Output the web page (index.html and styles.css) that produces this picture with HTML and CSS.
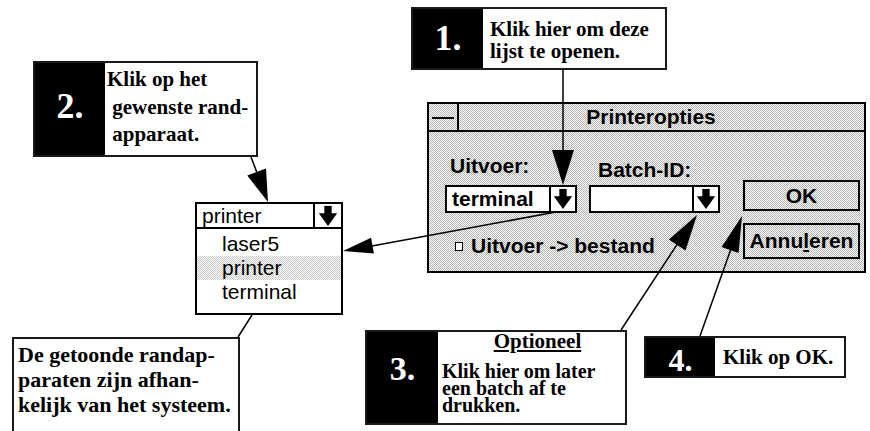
FILE: index.html
```html
<!DOCTYPE html>
<html lang="nl">
<head>
    <meta charset="UTF-8">
    <meta name="viewport" content="width=device-width, initial-scale=1.0">
    <title>Printeropties</title>
    <link rel="stylesheet" href="styles.css">
</head>
<body>
    <div class="canvas">
        <!-- callouts -->
        <div class="callout c1">
            <div class="num">1.</div>
            <div class="txt">Klik hier om deze<br>lijst te openen.</div>
        </div>

        <div class="callout c2">
            <div class="num">2.</div>
            <div class="txt">Klik op het<br>&nbsp;gewenste rand-<br>&nbsp;apparaat.</div>
        </div>

        <div class="callout c3">
            <div class="num">3.</div>
            <div class="txt">
                <div class="head">Optioneel</div>
                <div class="body">Klik hier om later<br>een batch af te<br>drukken.</div>
            </div>
        </div>

        <div class="callout c4">
            <div class="num">4.</div>
            <div class="txt">Klik op OK.</div>
        </div>

        <div class="note">De getoonde randap-<br>paraten zijn afhan-<br>kelijk van het systeem.</div>

        <!-- the dialog -->
        <div class="dialog">
            <div class="titlebar">
                <div class="close"><span class="dash"></span></div>
                <div class="title">Printeropties</div>
            </div>
            <div class="dlg-body">
                <div class="dlg-left">
                    <div class="fields">
                        <div class="field f-out">
                            <div class="lbl">Uitvoer:</div>
                            <div class="combo">
                                <span class="val">terminal</span>
                                <span class="drop"><svg viewBox="0 0 24 24"><rect x="8" y="1" width="8" height="10"/><polygon points="2,9 22,9 12,23"/></svg></span>
                            </div>
                        </div>
                        <div class="field f-batch">
                            <div class="lbl">Batch-ID:</div>
                            <div class="combo">
                                <span class="val"></span>
                                <span class="drop"><svg viewBox="0 0 24 24"><rect x="8" y="1" width="8" height="10"/><polygon points="2,9 22,9 12,23"/></svg></span>
                            </div>
                        </div>
                    </div>
                    <div class="check"><span class="box"></span>Uitvoer -&gt; bestand</div>
                </div>
                <div class="dlg-buttons">
                    <div class="btn ok">OK</div>
                    <div class="btn cancel">Annu<u>l</u>eren</div>
                </div>
            </div>
        </div>

        <!-- opened list -->
        <div class="listbox">
            <div class="list-head">
                <span class="val">printer</span>
                <span class="drop"><svg viewBox="0 0 24 24"><rect x="8" y="1" width="8" height="10"/><polygon points="2,9 22,9 12,23"/></svg></span>
            </div>
            <ul class="items">
                <li>laser5</li>
                <li class="sel">printer</li>
                <li>terminal</li>
            </ul>
        </div>

        <!-- arrows and leader lines -->
        <svg class="arrows" viewBox="0 0 870 431">
            <path d="M563 70 L563 152"/>
            <polygon points="563,185 552,150 574,150"/>
            <path d="M251 157 L262 186"/>
            <polygon points="268,202 247.3,175.6 266,168.6"/>
            <path d="M556 212 L372 246"/>
            <polygon points="343,251 371.1,237.7 373.9,253.5"/>
            <path d="M621 330 L680 240"/>
            <polygon points="697,215 668.9,239.5 685.5,250.5"/>
            <path d="M700 336 L732 246"/>
            <polygon points="742,216 721.6,247 738.6,253"/>
            <path d="M238 337 L252 315"/>
        </svg>
    </div>
</body>
</html>
```

FILE: styles.css
```css
body {
    margin: 0;
    background: #fff;
    color: #000;
}

.canvas {
    position: relative;
    width: 870px;
    height: 431px;
    overflow: hidden;
    background: #fff;
}

/* ---------- callouts ---------- */

.callout {
    position: absolute;
    display: flex;
    box-sizing: border-box;
    border: 2px solid #1a1a1a;
    background: #fff;
    font-family: "Liberation Serif", "Times New Roman", serif;
    font-weight: bold;
}

.callout .num {
    background: #000;
    color: #fff;
    text-align: center;
    flex-shrink: 0;
}

.c1 { left: 411px; top: 7px; width: 256px; height: 63px; }
.c1 .num { width: 70px; font-size: 36px; line-height: 36px; padding-top: 11px; }
.c1 .txt { font-size: 21px; line-height: 22px; padding: 9px 0 0 7px; }

.c2 { left: 33px; top: 61px; width: 225px; height: 96px; }
.c2 .num { width: 70px; font-size: 36px; line-height: 36px; padding-top: 25px; }
.c2 .txt { font-size: 21px; line-height: 27.5px; padding: 3px 0 0 2px; }

.c3 { left: 365px; top: 330px; width: 262px; height: 95px; }
.c3 .num { width: 71px; font-size: 34px; line-height: 34px; padding-top: 20px; }
.c3 .txt { flex: 1; padding-left: 4px; }
.c3 .head {
    font-size: 21px;
    line-height: 19px;
    text-align: center;
    padding-left: 8px;
    text-decoration: underline;
}
.c3 .body { font-size: 20px; line-height: 17px; margin-top: 12px; }

.c4 { left: 644px; top: 336px; width: 202px; height: 42px; }
.c4 .num { width: 69px; font-size: 32px; line-height: 32px; padding-top: 6px; }
.c4 .txt { font-size: 21px; line-height: 38px; padding-left: 8px; }

.note {
    position: absolute;
    left: 12px;
    top: 337px;
    width: 228px;
    height: 120px;
    box-sizing: border-box;
    border: 2px solid #1a1a1a;
    padding: 3px 0 0 4px;
    font-family: "Liberation Serif", "Times New Roman", serif;
    font-weight: bold;
    font-size: 22px;
    line-height: 25px;
}

/* ---------- dialog ---------- */

.dialog {
    position: absolute;
    left: 427px;
    top: 102px;
    width: 439px;
    height: 171px;
    box-sizing: border-box;
    border: 2px solid #000;
    background: repeating-conic-gradient(#b4b4b4 0% 25%, #fff 0% 50%) 0 0 / 2px 2px;
    font-family: "Liberation Sans", Arial, sans-serif;
    font-weight: bold;
    font-size: 21px;
}

.titlebar {
    display: flex;
    height: 28px;
    box-sizing: border-box;
    border-bottom: 2px solid #000;
}

.close {
    width: 30px;
    box-sizing: border-box;
    border-right: 2px solid #000;
    display: flex;
    align-items: center;
    justify-content: center;
}

.close .dash {
    display: block;
    width: 22px;
    height: 2px;
    background: #000;
    margin-top: 1px;
}

.title {
    flex: 1;
    text-align: center;
    line-height: 26px;
    padding-right: 21px;
}

.dlg-body {
    display: flex;
}

.dlg-left {
    padding: 23px 0 0 16px;
}

.fields {
    display: flex;
    gap: 12px;
}

.field .lbl {
    line-height: 22px;
    margin: 0 0 8px 5px;
}

.f-batch .lbl {
    margin: 4px 0 4px 9px;
}

.combo,
.list-head {
    display: flex;
    box-sizing: border-box;
    border: 2px solid #000;
    background: #fff;
}

.combo { height: 28px; }
.f-out .combo { width: 132px; }
.f-batch .combo { width: 131px; }

.combo .val {
    flex: 1;
    line-height: 24px;
    padding-left: 5px;
}

.drop {
    width: 26px;
    box-sizing: border-box;
    border-left: 2px solid #000;
    display: flex;
    align-items: center;
    justify-content: center;
}

.drop svg {
    width: 22px;
    height: 22px;
    fill: #000;
}

.check {
    display: flex;
    align-items: center;
    line-height: 22px;
    margin: 22px 0 0 10px;
}

.check .box {
    width: 8px;
    height: 9px;
    box-sizing: border-box;
    border: 1.5px solid #000;
    background: #fff;
    margin-right: 8px;
}

.dlg-buttons {
    padding: 48px 0 0 23px;
}

.btn {
    width: 117px;
    box-sizing: border-box;
    border: 2px solid #000;
    text-align: center;
}

.btn.ok { height: 31px; line-height: 27px; }
.btn.cancel { height: 36px; line-height: 32px; margin-top: 12px; }

/* ---------- opened list ---------- */

.listbox {
    position: absolute;
    left: 195px;
    top: 202px;
    width: 148px;
    height: 113px;
    box-sizing: border-box;
    border: 2px solid #000;
    border-top: 0;
    background: #fff;
    font-family: "Liberation Sans", Arial, sans-serif;
    font-size: 21px;
}

.list-head {
    margin: 0 -2px;
    height: 27px;
}

.list-head .val {
    flex: 1;
    line-height: 23px;
    padding-left: 5px;
}

.list-head .drop { width: 28px; }

.items {
    list-style-type: none;
    margin: 0;
    padding: 3px 0 0;
}

.items li {
    line-height: 24px;
    padding-left: 25px;
}

.items li.sel {
    background: repeating-conic-gradient(#c8c8c8 0% 25%, #fff 0% 50%) 0 0 / 2px 2px;
}

/* ---------- arrows ---------- */

.arrows {
    position: absolute;
    left: 0;
    top: 0;
    width: 870px;
    height: 431px;
    pointer-events: none;
}

.arrows path {
    fill: none;
    stroke: #000;
    stroke-width: 1.5;
}

.arrows polygon {
    fill: #000;
}
```
